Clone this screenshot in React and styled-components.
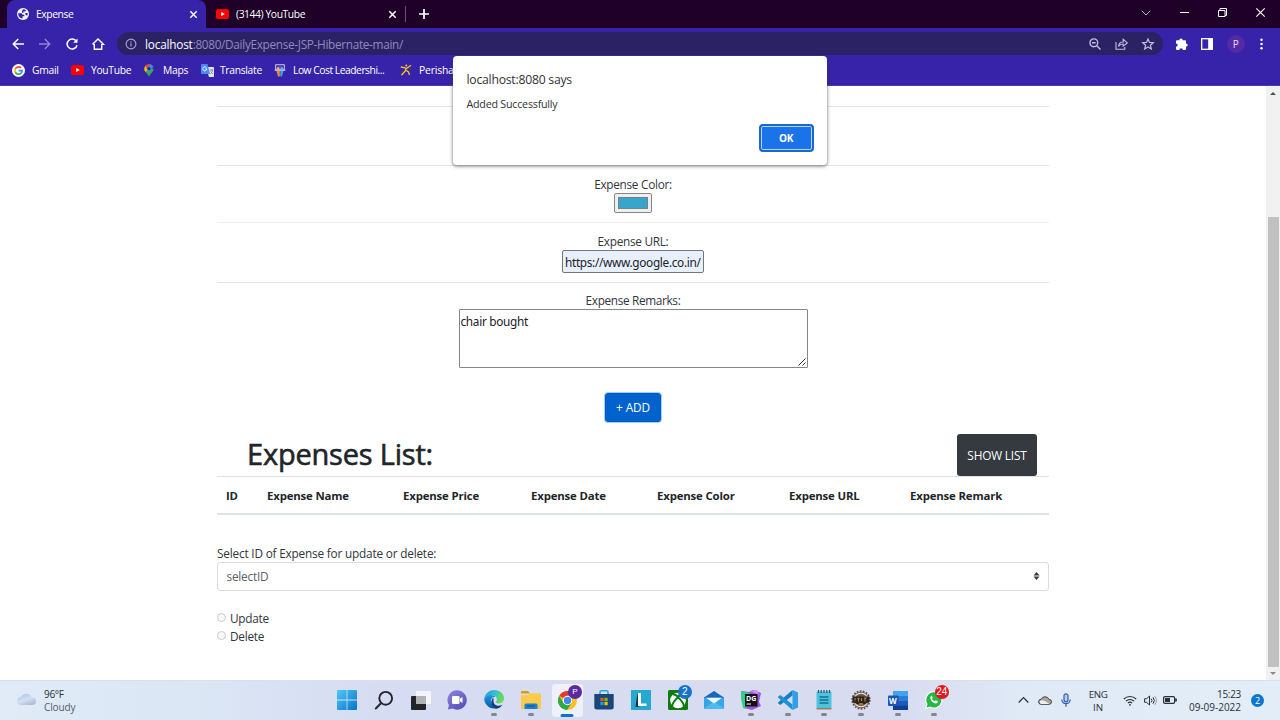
import React from "react";
import styled, { createGlobalStyle } from "styled-components";

const Global = createGlobalStyle`
  * { box-sizing: border-box; }
  body { margin: 0; background: #fff; overflow: hidden; font-family: "Open Sans", "Noto Sans", sans-serif; }
  svg { display: block; flex: none; overflow: visible; }
`;

const Screen = styled.div`
  position: relative;
  width: 1280px;
  height: 720px;
  display: flex;
  flex-direction: column;
  overflow: hidden;
`;

const Text = styled.span`
  font-family: ${(p) => (p.$noto ? '"Noto Sans"' : '"Open Sans"')}, sans-serif;
  font-size: ${(p) => p.$size || 11.8}px;
  font-weight: ${(p) => p.$weight || 400};
  letter-spacing: ${(p) => p.$ls || 0}px;
  color: ${(p) => p.$color || "inherit"};
  white-space: nowrap;
`;

/* ---------- browser chrome ---------- */

const TabStrip = styled.div`
  height: 28px;
  background: #1f0029;
  display: flex;
  padding-left: 7px;
  color: #fff;
`;

const Tab = styled.div`
  width: ${(p) => p.$w}px;
  height: 28px;
  display: flex;
  align-items: center;
  gap: ${(p) => p.$gap}px;
  padding: 0 9px 0 10px;
  background: ${(p) => (p.$active ? "#3723a9" : "transparent")};
  border-radius: 8px 8px 0 0;
`;

const Spacer = styled.div`
  flex: 1;
`;

const NewTab = styled.div`
  display: flex;
  align-items: center;
  gap: 13px;
`;

const Divider = styled.div`
  width: 1px;
  height: 16px;
  background: #6b5474;
`;

const WindowButtons = styled.div`
  display: flex;
  align-items: center;
  gap: 29px;
  padding: 0 15px 3px 0;
`;

const Toolbar = styled.div`
  height: 30px;
  background: #3723a9;
  display: flex;
  align-items: center;
  padding: 1px 11px 0 12px;
  color: #fff;
`;

const NavButtons = styled.div`
  display: flex;
  gap: 14.8px;
  width: 105px;
`;

const Omnibox = styled.div`
  width: 1046px;
  height: 23px;
  border-radius: 12px;
  background: #2b2266;
  display: flex;
  align-items: center;
  padding: 0 9px 0 8px;
  gap: 8px;
`;

const OmniActions = styled.div`
  display: flex;
  align-items: center;
  gap: 14px;
  color: #c3bfdd;
`;

const ToolActions = styled.div`
  flex: 1;
  display: flex;
  align-items: center;
  justify-content: space-between;
  padding: 0 6px 0 13px;
`;

const Avatar = styled.div`
  width: 18px;
  height: 18px;
  margin-right: 2px;
  border-radius: 50%;
  background: #552aa5;
  color: #eadcff;
  font-size: 10px;
  display: flex;
  align-items: center;
  justify-content: center;
`;

const Bookmarks = styled.div`
  height: 28px;
  background: #3723a9;
  border-bottom: 1px solid #4a3ab0;
  display: flex;
  align-items: center;
  padding: 0 0 3px 12px;
  color: #fff;
`;

const Bookmark = styled.div`
  flex: 0 0 ${(p) => p.$w}px;
  display: flex;
  align-items: center;
  gap: ${(p) => p.$gap || 6}px;
`;

/* ---------- page ---------- */

const Viewport = styled.div`
  height: 594px;
  display: flex;
  background: #fff;
  color: #212529;
`;

const Page = styled.div`
  flex: 1;
  display: flex;
  flex-direction: column;
  align-items: center;
`;

const Container = styled.div`
  width: 832px;
  display: flex;
  flex-direction: column;
  color: #30353a;
`;

const FormRow = styled.div`
  height: ${(p) => p.$h}px;
  border-bottom: ${(p) => (p.$last ? "0" : "1px")} solid ${(p) => p.$line || "#e2e4e6"};
  display: flex;
  flex-direction: column;
  align-items: center;
  padding-top: ${(p) => p.$top || 9}px;
`;

const Label = styled.label`
  height: 18px;
  display: flex;
  align-items: center;
`;

const ColorField = styled.div`
  width: 38px;
  height: 20px;
  border: 1px solid #85878b;
  border-radius: 2px;
  background: #efefef;
  padding: 3px;
`;

const Swatch = styled.div`
  height: 12px;
  background: #38a6cc;
  border: 1px solid #74838b;
`;

const UrlField = styled.div`
  width: 142px;
  height: 23px;
  border: 1px solid #767676;
  border-radius: 2px;
  background: #e8f0fe;
  display: flex;
  align-items: center;
  padding: 0 2px;
`;

const Remarks = styled.div`
  width: 349px;
  height: 59px;
  border: 1px solid #85878b;
  border-radius: 1px;
  display: flex;
  justify-content: space-between;
  padding: 2px 1px 1px 1px;
  line-height: 18px;
`;

const Grip = styled.div`
  align-self: flex-end;
`;

const AddButton = styled.button`
  width: 56px;
  height: 29px;
  margin: 0 auto;
  padding: 0 0 1px;
  border: 1px solid #005cbf;
  border-radius: 3px;
  box-shadow: 0 0 0 1px #9fd0ff;
  background: #0062cc;
  color: #fff;
`;

const ListHeader = styled.div`
  height: 42px;
  margin-top: 12px;
  display: flex;
  align-items: center;
  justify-content: space-between;
  padding: 0 12px 0 30px;
`;

const Heading = styled.h2`
  margin: 0;
  line-height: 40px;
  font-weight: 500;
  color: #212529;
  -webkit-text-stroke: 0.6px #212529;
`;

const ShowButton = styled.button`
  width: 80px;
  height: 42px;
  padding: 0;
  border: 0;
  border-radius: 3px;
  background: #343a40;
  color: #fff;
`;

const Table = styled.div`
  display: grid;
  grid-template-columns: 41px 136px 128px 126px 132px 121px 1fr;
  align-items: center;
  height: 39px;
  padding: 1px 0 0 9px;
  border-top: 1px solid #dee2e6;
  border-bottom: 2px solid #dee2e6;
  color: #212529;
`;

const SelectLabel = styled.label`
  height: 18px;
  margin-top: 29px;
  display: flex;
  align-items: center;
`;

const Select = styled.div`
  height: 29px;
  border: 1px solid #d9dde1;
  border-radius: 3px;
  display: flex;
  align-items: center;
  justify-content: space-between;
  padding: 0 8px 1px 8.500px;
  color: #5a6168;
`;

const Radios = styled.div`
  margin-top: 18px;
  display: flex;
  flex-direction: column;
`;

const RadioRow = styled.label`
  height: 18px;
  padding-bottom: 1px;
  display: flex;
  align-items: center;
  gap: 4px;
`;

const Dot = styled.span`
  width: 9px;
  height: 9px;
  border: 1px solid #c9cacc;
  border-radius: 50%;
  background: #f8f8f8;
`;

const Scrollbar = styled.div`
  width: 14px;
  background: #f1f1f1;
  display: flex;
  flex-direction: column;
  align-items: center;
`;

const ScrollArrow = styled.div`
  height: ${(p) => p.$h}px;
  display: flex;
  align-items: center;
`;

const Thumb = styled.div`
  width: 11px;
  height: 450px;
  margin: 116px 0 0 0;
  background: #c1c1c1;
`;

const Dialog = styled.div`
  position: absolute;
  left: 453px;
  top: 56px;
  width: 373.500px;
  height: 109px;
  padding: 13px 13px 13px 13.500px;
  background: #fff;
  border-radius: 4px;
  box-shadow: 0 1px 3px 1px rgba(50, 55, 60, 0.45);
  display: flex;
  flex-direction: column;
  color: #303134;
`;

const DialogLine = styled.div`
  height: ${(p) => p.$h}px;
  display: flex;
  align-items: center;
`;

const OkButton = styled.button`
  width: 55px;
  height: 28px;
  margin: auto 0 0 auto;
  padding: 0 0 1px;
  border: 2px solid #1967d2;
  border-radius: 4px;
  box-shadow: inset 0 0 0 1px #b9d7fb;
  background: #1a73e8;
  color: #fff;
`;

/* ---------- taskbar ---------- */

const Taskbar = styled.div`
  height: 40px;
  padding-bottom: 1px;
  border-top: 1px solid #dcdfe8;
  background: linear-gradient(90deg, #e0ebf7 0, #dbe6f5 200px, #d6dcf2 380px, #d8dcf0 900px, #e0eaf6 1030px, #e2edf8 100%);
  display: flex;
  align-items: center;
  color: #2b2f36;
`;

const Weather = styled.div`
  width: 329px;
  padding-left: 17px;
  display: flex;
  align-items: center;
  gap: 7px;
`;

const Stack = styled.div`
  display: flex;
  flex-direction: column;
  align-items: ${(p) => p.$align || "flex-start"};
  padding-top: 1px;
  line-height: 13px;
`;

const Apps = styled.div`
  display: grid;
  grid-template-columns: repeat(17, 36.7px);
`;

const AppSlot = styled.div`
  position: relative;
  height: 33px;
  margin: 0 2.5px;
  display: flex;
  align-items: center;
  justify-content: center;
  border-radius: 3px;
  background: ${(p) => (p.$active ? "#eef1fb" : "transparent")};
`;

const Running = styled.span`
  position: absolute;
  bottom: ${(p) => (p.$active ? 0 : 1)}px;
  left: 50%;
  transform: translateX(-50%);
  width: ${(p) => (p.$active ? 13 : 6)}px;
  height: 3px;
  border-radius: 2px;
  background: ${(p) => (p.$active ? "#1670c4" : "#83868f")};
`;

const Badge = styled.span`
  position: absolute;
  top: 1.500px;
  right: 1.500px;
  min-width: 14px;
  height: 14px;
  border-radius: 7px;
  background: ${(p) => p.$bg};
  color: #fff;
  font-family: "Liberation Sans", sans-serif;
  font-size: ${(p) => p.$size || 10}px;
  line-height: 14px;
  text-align: center;
`;

const Tray = styled.div`
  flex: 1;
  display: flex;
  align-items: center;
  padding: 0 16px 0 65px;
`;

const TrayIcons = styled.div`
  display: flex;
  align-items: center;
  gap: ${(p) => p.$gap}px;
  margin-right: ${(p) => p.$mr}px;
`;

const Clock = styled.div`
  width: 59px;
  margin-right: 10px;
`;

const Notice = styled.div`
  width: 13px;
  height: 13px;
  border-radius: 50%;
  background: #0a76d0;
  color: #fff;
  font-size: 9px;
  line-height: 13px;
  text-align: center;
`;

/* ---------- icons ---------- */

const Line = ({ w, h = w, sw = 1.3, vb, children, ...rest }) => (
  <svg width={w} height={h} viewBox={vb || `0 0 ${w} ${h}`} fill="none" stroke="currentColor" strokeWidth={sw} {...rest}>
    {children}
  </svg>
);

const Globe = () => (
  <svg width="12" height="12" viewBox="0 0 12 12">
    <circle cx="6" cy="6" r="6" fill="#f4f2fc" />
    <path d="M1.200 5.200h3.200l1.500 1.500h1.400v1.500H5.500v2.200C2.800 10.300 1 8 1.200 5.200zM6 1.200c1.200 0 2.200.4 3 1.100L8.200 3.500H6.500v1.300H5V3.300zM8.300 4.900h2.300c.2 1 0 2-.5 2.900L8.300 6.600z" fill="#3723a9" />
  </svg>
);

const YouTube = () => (
  <svg width="13" height="10" viewBox="0 0 13 10">
    <rect width="13" height="10" rx="2.6" fill="#f00" />
    <path d="M5.2 2.900v4.200L8.800 5z" fill="#fff" />
  </svg>
);

const Cross = ({ s = 7, sw = 1.5 }) => (
  <Line w={s} sw={sw}>
    <path d={`M.3.3l${s - 0.6} ${s - 0.6}M${s - 0.3} .3L.3 ${s - 0.3}`} />
  </Line>
);

const GoogleG = () => (
  <svg width="13" height="13" viewBox="0 0 14 14" fill="none" strokeWidth="1.8">
    <circle cx="7" cy="7" r="7" fill="#fff" />
    <path d="M9.700 4.200A3.900 3.900 0 0 0 3.600 5.200" stroke="#ea4335" />
    <path d="M3.600 5.200A3.900 3.900 0 0 0 3.600 8.900" stroke="#fbbc05" />
    <path d="M3.600 8.900A3.900 3.900 0 0 0 9.500 10" stroke="#34a853" />
    <path d="M9.500 10A3.900 3.900 0 0 0 10.900 7.200H7.200" stroke="#4285f4" />
  </svg>
);

const MapsPin = () => (
  <svg width="10" height="13" viewBox="0 0 10 13">
    <path d="M5 13C4.500 10 .3 8 .3 4.700L5 4.500l4.700.2C9.700 8 5.500 10 5 13z" fill="#34a853" />
    <path d="M.3 4.700A4.700 4.700 0 0 1 1.500 1.600L5 4.700 1.500 8A5 5 0 0 1 .3 4.700z" fill="#fbbc04" />
    <path d="M1.300 1.800A4.700 4.700 0 0 1 6.500.3L3 5z" fill="#ea4335" />
    <path d="M6 .1a4.700 4.700 0 0 1 3.400 2.700L4.500 8.500 3 5z" fill="#4285f4" />
    <circle cx="5" cy="4.600" r="1.600" fill="#2a2477" />
  </svg>
);

const TranslateIcon = () => (
  <svg width="13" height="13" viewBox="0 0 13 13">
    <path d="M5 3h7a1 1 0 0 1 1 1v8a1 1 0 0 1-1 1H8z" fill="#e3e6ee" />
    <path d="M1 0h5.500L9 10H1a1 1 0 0 1-1-1V1a1 1 0 0 1 1-1z" fill="#4b8af0" />
    <path d="M5.400 3.600A2 2 0 1 0 5.800 5H4.200" stroke="#fff" strokeWidth=".9" fill="none" />
    <path d="M8.500 6h3.700M10.300 5v1M11.600 6c-.4 2-1.300 3-2.300 3.800M9.600 7.500l2.300 2.500" stroke="#6e7c9b" strokeWidth=".8" fill="none" />
  </svg>
);

const Slides = () => (
  <svg width="12" height="13" viewBox="0 0 12 13">
    <path d="M1.500.6h9v5.200h-9z" fill="#5343a8" stroke="#b6aee6" />
    <path d="M.6 6.200h10.800" stroke="#dcd7f4" />
    <circle cx="4.100" cy="4.600" r="1.400" fill="#f5b070" />
    <circle cx="7.900" cy="4.600" r="1.400" fill="#69b3e8" />
    <path d="M2.500 7h3.300v5.500H4z" fill="#ef8a3a" />
    <path d="M6.200 7h3.300L8 12.500H6.200z" fill="#31a0d9" />
  </svg>
);

const Runner = () => (
  <svg width="12" height="12" viewBox="0 0 12 12" fill="none" stroke="#f6c32c" strokeWidth="1.300">
    <path d="M.8 3l4.700.9M11 1.200L6.500 4.500M6.200 3.700L5.200 7 1.500 11.200M5.500 6l3 2 1 3" />
    <path d="M7.500 5.500l3.500-1M4 7L.7 8.500" stroke="#54452f" strokeWidth="1" />
    <circle cx="6.300" cy="1.600" r="1" fill="#f6c32c" stroke="none" />
  </svg>
);

const Puzzle = () => (
  <svg width="12" height="12" viewBox="0 0 12 12" fill="#fff">
    <path d="M0 3.200a1 1 0 0 1 1-1h2.300a1.700 1.700 0 0 1 3.400 0H9a1 1 0 0 1 1 1v2.200a1.700 1.700 0 0 1 0 3.400V11a1 1 0 0 1-1 1H6.900a1.800 1.800 0 0 0-3.600 0H1a1 1 0 0 1-1-1V8.800a1.700 1.700 0 0 0 0-3.400z" />
  </svg>
);

const WinLogo = () => (
  <svg width="20" height="20" viewBox="0 0 20 20">
    <defs>
      <linearGradient id="win" x2="1" y2="1">
        <stop stopColor="#4fc9f7" />
        <stop offset="1" stopColor="#0873c9" />
      </linearGradient>
    </defs>
    <path d="M1 0h8.600v9.600H0V1a1 1 0 0 1 1-1zM10.400 0H19a1 1 0 0 1 1 1v8.600h-9.600zM0 10.400h9.600V20H1a1 1 0 0 1-1-1zM10.400 10.400H20V19a1 1 0 0 1-1 1h-8.600z" fill="url(#win)" />
  </svg>
);

const SearchIcon = () => (
  <Line w={18} sw={1.9} stroke="#24262b">
    <circle cx="10.700" cy="7.300" r="6.400" />
    <path d="M6.200 12L.8 17.500" strokeLinecap="round" />
  </Line>
);

const TaskView = () => (
  <svg width="20" height="19" viewBox="0 0 20 19">
    <rect y="5" width="15" height="14" rx="1" fill="#222428" />
    <rect x="5" y="0" width="15" height="13" rx="1" fill="#f3f4f7" />
    <rect x="5" y="5" width="10" height="8" fill="#b0b2b6" />
  </svg>
);

const Chat = () => (
  <svg width="20" height="20" viewBox="0 0 20 20">
    <defs>
      <linearGradient id="chat" x2=".7" y2="1">
        <stop stopColor="#8d86dd" />
        <stop offset="1" stopColor="#5950b8" />
      </linearGradient>
    </defs>
    <path d="M10 .3a9.700 9.700 0 1 1-4.400 18.300L.8 19.500l1.200-4.300A9.700 9.700 0 0 1 10 .3z" fill="url(#chat)" />
    <rect x="5" y="6" width="7.500" height="8" rx="1.300" fill="#fff" />
    <path d="M13 8.800L15.500 7v6L13 11.200z" fill="#fff" />
  </svg>
);

const Edge = () => (
  <svg width="20" height="20" viewBox="0 0 20 20">
    <defs>
      <linearGradient id="edgeTop" x2="1" y2=".4">
        <stop stopColor="#1897d8" />
        <stop offset=".55" stopColor="#35c1d2" />
        <stop offset="1" stopColor="#6bdc55" />
      </linearGradient>
      <linearGradient id="edgeLow" x2="0" y2="1">
        <stop stopColor="#1a9be0" />
        <stop offset="1" stopColor="#0c56a8" />
      </linearGradient>
    </defs>
    <path d="M.2 9.500C.6 4 5 0 10.300 0 16 0 20 3.800 20 8.200c0 3.200-2.400 5.200-5.200 5.200-2.300 0-3.300-1-2.900-1.800.8-1 1-1.700 1-2.400C12.700 6.600 10 5 7 5 3.500 5 .6 7 .2 9.500z" fill="url(#edgeTop)" />
    <path d="M.2 9.500C.8 6.500 4 4.800 7 5c2 .1 3.500.8 4.600 1.800C8 6.500 6.500 9.500 7 12.300c.7 3.400 4.500 5.500 8 5A10 10 0 0 1 .2 9.500z" fill="url(#edgeLow)" />
    <path d="M9.500 7.500C6.500 10 6.500 14.500 9.500 17.500c2.500 2 6 1.500 9-2.700-3 1.500-6.500 1.300-8-.8-1.400-2-1-4.500-1-6.500z" fill="#123f82" />
  </svg>
);

const Folder = () => (
  <svg width="20" height="18" viewBox="0 0 20 18">
    <path d="M0 1a1 1 0 0 1 1-1h6l2 2.500H0z" fill="#d99a1b" />
    <path d="M0 4h7l2-1.800h10a1 1 0 0 1 1 1V17a1 1 0 0 1-1 1H1a1 1 0 0 1-1-1z" fill="#fbcb49" />
    <path d="M3.500 18v-4a1.500 1.500 0 0 1 1.500-1.500h10a1.500 1.500 0 0 1 1.500 1.500v4z" fill="#1c7fd0" />
    <path d="M6 15h8" stroke="#0f5ba5" strokeWidth="1.300" />
  </svg>
);

const Chrome = () => (
  <svg width="19" height="19" viewBox="0 0 20 20">
    <circle cx="10" cy="10" r="10" fill="#fbc116" />
    <path d="M10 10L1.340 5A10 10 0 0 1 18.660 5H10z" fill="#e33b2e" />
    <path d="M1.340 5A10 10 0 0 0 9.500 20L14.300 12.500 10 14.500 5.700 12.500z" fill="#2da94f" />
    <circle cx="10" cy="10" r="5" fill="#fff" />
    <circle cx="10" cy="10" r="3.900" fill="#4285f4" />
  </svg>
);

const Store = () => (
  <svg width="20" height="20" viewBox="0 0 20 20">
    <path d="M6 4.500V2a1.200 1.200 0 0 1 1.200-1.200h5.600A1.200 1.200 0 0 1 14 2v2.500" fill="none" stroke="#2fa6dc" strokeWidth="1.500" />
    <path d="M.3 4h19.400v13a2.500 2.500 0 0 1-2.500 2.500H2.800A2.500 2.500 0 0 1 .3 17z" fill="#1a4678" />
    <path d="M6.300 7.800h3.300v3.300H6.300z" fill="#f25022" />
    <path d="M10.400 7.800h3.300v3.300h-3.300z" fill="#7fba00" />
    <path d="M6.300 11.900h3.300v3.300H6.300z" fill="#00a4ef" />
    <path d="M10.400 11.900h3.300v3.300h-3.300z" fill="#ffb900" />
  </svg>
);

const LApp = () => (
  <svg width="20" height="20" viewBox="0 0 20 20">
    <path d="M0 0h20v20H0z" fill="#27a9cf" />
    <path d="M6.500 3L4.500 17H8z" fill="#14303f" />
    <path d="M7 3h3v10.500h5.500V16H7z" fill="#fff" />
  </svg>
);

const Xbox = () => (
  <svg width="20" height="20" viewBox="0 0 20 20">
    <rect width="20" height="20" rx="1.500" fill="#107c10" />
    <circle cx="10" cy="10.500" r="7.800" fill="#fff" />
    <path d="M5 4.300C7 4.500 8.800 5.700 10 6.800c1.200-1.100 3-2.300 5-2.500M4 16.800c.3-3.300 2.500-6.500 6-9.600 3.500 3.100 5.700 6.300 6 9.600" fill="none" stroke="#107c10" strokeWidth="1.900" />
  </svg>
);

const Mail = () => (
  <svg width="20" height="18" viewBox="0 0 20 18">
    <path d="M0 6.500L10 0l10 6.500v3H0z" fill="#1768b8" />
    <path d="M0 6.800h20V17a1 1 0 0 1-1 1H1a1 1 0 0 1-1-1z" fill="#35a7e8" />
    <path d="M0 17.500L10 10.500l10 7-1 .5H1z" fill="#4fbaf2" />
    <path d="M2 6.800h16L10 12.500z" fill="#f5f9fd" />
  </svg>
);

const DataGrip = () => (
  <svg width="20" height="20" viewBox="0 0 20 20">
    <path d="M0 1l8 1 4-2 8 3-2 9 2 4-9 4-8-2L0 8z" fill="#9a55e0" />
    <path d="M0 1l9 2-4 16-3-1L0 8z" fill="#2fd089" />
    <path d="M9 1l7-1 2 5z" fill="#d38bf2" />
    <path d="M4 4h12.500v12.500H4z" fill="#111" />
    <text x="5" y="11" fontSize="7" fontWeight="700" fill="#fff" fontFamily="Open Sans, sans-serif">DG</text>
    <path d="M5.500 14h4.500" stroke="#fff" />
  </svg>
);

const VSCode = () => (
  <svg width="20" height="20" viewBox="0 0 20 20">
    <path d="M14.500 0L20 2.500v15L14.500 20z" fill="#2f9fe8" />
    <path d="M14.500 0v5.500L2.300 15 0 13.300v-.8z" fill="#167fc9" />
    <path d="M14.500 20v-5.500L2.300 5 0 6.700v.8z" fill="#1f8fd8" />
  </svg>
);

const Notepad = () => (
  <svg width="16" height="20" viewBox="0 0 16 20">
    <rect x=".5" y="1.500" width="15" height="17" rx="1" fill="#4dc3de" />
    <path d="M.5 18.800h15" stroke="#9a6634" strokeWidth="1.200" />
    <path d="M2.500 0v3M5.200 0v3M8 0v3M10.800 0v3M13.500 0v3" stroke="#2b5668" strokeWidth="1.200" />
    <path d="M3.500 7h9M3.500 10h9M3.500 13h9" stroke="#176e91" strokeWidth="1.300" />
  </svg>
);

const Gear = () => (
  <svg width="20" height="20" viewBox="0 0 20 20">
    <circle cx="10" cy="10" r="8.800" fill="none" stroke="#5b5048" strokeWidth="1.700" strokeDasharray="1.700 1.370" />
    <circle cx="10" cy="10" r="7.800" fill="#f0ede9" stroke="#6b5b4d" strokeWidth="1" />
    <circle cx="10" cy="10" r="6.200" fill="#6d5440" />
    <path d="M1.500 6.500h17v5.500L14 14H6l-4.500-2z" fill="#2d2420" />
    <path d="M4 8v2.500M6.500 8.500h2M7.500 8.500v3M10.500 8v3M13 8h2.500M14 8v3.500" stroke="#b98d5b" />
    <path d="M8 13h4v2.500H8z" fill="#9c7141" />
  </svg>
);

const Word = () => (
  <svg width="20" height="19" viewBox="0 0 20 19">
    <rect x="5" width="15" height="19" rx="1" fill="#2b7cd3" />
    <path d="M5 0h15v5H5z" fill="#41a5ee" />
    <path d="M5 10h15v4.500H5z" fill="#185abd" />
    <path d="M5 14.500h15V19H5z" fill="#103f91" />
    <rect y="4.500" width="10.500" height="10.500" rx="1" fill="#1a56b4" />
    <text x="1" y="12.700" fontSize="8" fontWeight="700" fill="#fff" fontFamily="Open Sans, sans-serif">W</text>
  </svg>
);

const WhatsApp = () => (
  <svg width="18" height="18" viewBox="0 0 18 18">
    <path d="M9 .2a8.700 8.700 0 1 1-4.200 16.400L0 18l1.400-4.600A8.700 8.700 0 0 1 9 .2z" fill="#fff" />
    <path d="M9 1.300a7.600 7.600 0 1 1-4 14.100L1.500 16.500l1.100-3.400A7.600 7.600 0 0 1 9 1.300z" fill="#25b943" />
    <path d="M5.600 5.200c.7-.9 1.300-.5 1.500 0l.6 1.500-.7 1c.6 1.300 1.500 2 2.800 2.600l.9-1.100 2.100 1c.3.700-.5 2.300-2 2.300C8 12.500 4.500 8.500 5.600 5.200z" fill="#fff" />
  </svg>
);

const CloudBig = () => (
  <svg width="20" height="14" viewBox="0 0 20 14">
    <defs>
      <linearGradient id="cloud" x2=".6" y2="1">
        <stop stopColor="#9fc1ee" />
        <stop offset=".6" stopColor="#d5e0f0" />
        <stop offset="1" stopColor="#acbfdb" />
      </linearGradient>
    </defs>
    <path d="M4 12A4 4 0 0 1 4 4a6 6 0 0 1 11 .5A3.800 3.800 0 0 1 16 12z" fill="url(#cloud)" />
  </svg>
);

const TrayCloud = () => (
  <svg width="14" height="10" viewBox="0 0 14 10">
    <path d="M3 9.300a2.500 2.500 0 0 1 .2-5A4.200 4.200 0 0 1 11 4.500a2.400 2.400 0 0 1 .2 4.800z" fill="#aaa7a3" stroke="#3f4043" />
    <path d="M3 9a2 2 0 0 1 .8-3.800L7 6l4.500 3z" fill="#f1efec" />
  </svg>
);

const Mic = () => (
  <Line w={10} h={14} sw={1.200} stroke="#2f5fae">
    <rect x="3" y=".8" width="4" height="8" rx="2" fill="#b9cfee" />
    <path d="M.8 6.500a4.200 4.200 0 0 0 8.400 0M5 10.800v3" />
  </Line>
);

const Wifi = () => (
  <Line w={14} h={11} sw={1.100}>
    <path d="M.8 4A9 9 0 0 1 13.200 4M2.800 6.200a6 6 0 0 1 8.400 0M4.900 8.200a3 3 0 0 1 4.200 0" />
    <circle cx="7" cy="9.800" r=".9" fill="currentColor" stroke="none" />
  </Line>
);

const Speaker = () => (
  <Line w={13} h={11} sw={1}>
    <path d="M.6 3.700h2L5.500 1v9L2.600 7.300h-2zM7.300 3.700a3 3 0 0 1 0 3.600M9 2.300a5 5 0 0 1 0 6.400" />
    <path d="M10.700 1a7.500 7.500 0 0 1 0 9" opacity=".4" />
  </Line>
);

const Battery = () => (
  <Line w={14} h={8} sw={1.200}>
    <rect x=".6" y=".6" width="11" height="6.800" rx="1.300" />
    <path d="M2 2h5v4H2z" fill="currentColor" stroke="none" />
    <path d="M13 2.600v2.800" strokeWidth="1.700" />
  </Line>
);

/* ---------- data ---------- */

const bookmarks = [
  { icon: <GoogleG />, label: "Gmail", w: 59, gap: 7, ls: -0.35 },
  { icon: <YouTube />, label: "YouTube", w: 73, gap: 7, ls: -0.4 },
  { icon: <MapsPin />, label: "Maps", w: 57, gap: 9, ls: -0.35 },
  { icon: <TranslateIcon />, label: "Translate", w: 73, gap: 6, ls: -0.4 },
  { icon: <Slides />, label: "Low Cost Leadershi...", w: 126, gap: 7, ls: -0.58 },
  { icon: <Runner />, label: "Perishable", w: 60, gap: 7, ls: -0.25 },
].map((b) => ({ ...b, ls: b.ls + 0.1 }));

const columns = ["ID", "Expense Name", "Expense Price", "Expense Date", "Expense Color", "Expense URL", "Expense Remark"];

const apps = [
  { icon: <WinLogo /> },
  { icon: <SearchIcon /> },
  { icon: <TaskView /> },
  { icon: <Chat /> },
  { icon: <Edge />, run: true },
  { icon: <Folder />, run: true },
  { icon: <Chrome />, run: true, active: true, badge: "P", bg: "#5a2aa0", size: 8 },
  { icon: <Store /> },
  { icon: <LApp /> },
  { icon: <Xbox />, badge: "2", bg: "#1673c8" },
  { icon: <Mail /> },
  { icon: <DataGrip />, run: true },
  { icon: <VSCode />, run: true },
  { icon: <Notepad />, run: true },
  { icon: <Gear />, run: true },
  { icon: <Word />, run: true },
  { icon: <WhatsApp />, run: true, badge: "24", bg: "#e5141f" },
];

export default function App() {
  return (
    <Screen>
      <Global />
      <TabStrip>
        <Tab $active $w={199} $gap={7}>
          <Globe />
          <Text $size={10.300} $ls={-0.4}>Expense</Text>
          <Spacer />
          <Cross />
        </Tab>
        <Tab $w={199} $gap={7}>
          <YouTube />
          <Text $size={10.300} $ls={-0.400}>(3144) YouTube</Text>
          <Spacer />
          <Cross />
        </Tab>
        <NewTab>
          <Divider />
          <Line w={10} sw={1.700}><path d="M5 0v10M0 5h10" /></Line>
        </NewTab>
        <Spacer />
        <WindowButtons>
          <Line w={10} h={6} sw={1} opacity=".7"><path d="M.7.700L5 5 9.300.700" /></Line>
          <Line w={9} h={9} sw={1}><path d="M0 4.500h9" /></Line>
          <Line w={9} h={9} sw={1}><path d="M.5 2.500h6.500V8.500H.5zM2 2.500V.5h6.500v7H7" /></Line>
          <Cross s={9} sw={1.100} />
        </WindowButtons>
      </TabStrip>

      <Toolbar>
        <NavButtons>
          <Line w={12} sw={1.400}><path d="M12 6H1.200M6.200 1L1.200 6l5 5" /></Line>
          <Line w={12} sw={1.300} opacity=".45"><path d="M0 6h10.800M5.800 1l5 5-5 5" /></Line>
          <Line w={12} sw={1.500}>
            <path d="M10.300 3.200A5 5 0 1 0 11 7.200" />
            <path d="M11.500.5v4.300H7.200z" fill="currentColor" stroke="none" />
          </Line>
          <Line w={12} sw={1.400}><path d="M2.300 6v5.200h7.400V6M.6 6.300L6 1l5.400 5.300H9.700M.6 6.300h1.700" /></Line>
        </NavButtons>
        <Omnibox>
          <Line w={12} sw={1.100} color="#aaa5cf">
            <circle cx="6" cy="6" r="4.900" />
            <path d="M6 5.300v3.300M6 3.200v1.200" />
          </Line>
          <Text $size={11.800} $ls={-0.320} $color="#9089bf">
            <Text $size={11.800} $ls={-0.200} $color="#fff">localhost</Text>:8080/DailyExpense-JSP-Hibernate-main/
          </Text>
          <Spacer />
          <OmniActions>
            <Line w={12} sw={1.400}><circle cx="4.800" cy="4.800" r="3.900" /><path d="M7.700 7.700L11.500 11.500M3 4.800h3.600" /></Line>
            <Line w={13} h={12} sw={1.100}><path d="M1 4v7.300h8.800V9M3.500 8.500c.3-3 2-4.500 4.700-4.500V1.200L12.300 5 8.200 8.200V6C6 6 4.500 7 3.500 8.500z" /></Line>
            <Line w={12} sw={1.200}><path d="M6 .9l1.500 3.500 3.800.3-2.900 2.500.9 3.700L6 8.900l-3.300 2 .9-3.700L.7 4.700l3.800-.3z" /></Line>
          </OmniActions>
        </Omnibox>
        <ToolActions>
          <Puzzle />
          <Line w={12} sw={1.300}>
            <rect x=".7" y=".7" width="10.600" height="10.600" />
            <path d="M7.200 0h4.800v12H7.200z" fill="currentColor" stroke="none" />
          </Line>
          <Avatar>P</Avatar>
          <svg width="3" height="12" viewBox="0 0 3 12" fill="#fff">
            <circle cx="1.500" cy="1.700" r="1.250" />
            <circle cx="1.500" cy="6" r="1.250" />
            <circle cx="1.500" cy="10.300" r="1.250" />
          </svg>
        </ToolActions>
      </Toolbar>

      <Bookmarks>
        {bookmarks.map((b) => (
          <Bookmark key={b.label} $w={b.w} $gap={b.gap}>
            {b.icon}
            <Text $size={10.300} $ls={b.ls}>{b.label}</Text>
          </Bookmark>
        ))}
      </Bookmarks>

      <Viewport>
        <Page>
          <Container>
            <FormRow $h={21} />
            <FormRow $h={59} />
            <FormRow $h={57} $line="#eef0f1">
              <Label><Text $ls={-0.28}>Expense Color:</Text></Label>
              <ColorField><Swatch /></ColorField>
            </FormRow>
            <FormRow $h={60}>
              <Label><Text $ls={-0.28}>Expense URL:</Text></Label>
              <UrlField>
                <Text $noto $ls={-0.32} $color="#202124">https://www.google.co.in/</Text>
              </UrlField>
            </FormRow>
            <FormRow $h={110} $last $top={8}>
              <Label><Text $ls={-0.34}>Expense Remarks:</Text></Label>
              <Remarks>
                <Text $noto $ls={-0.300} $color="#202124">chair bought</Text>
                <Grip><Line w={8} h={8} sw={1}><path d="M.5 7.500l7-7M4.500 7.500l3-3" /></Line></Grip>
              </Remarks>
            </FormRow>
            <AddButton><Text $ls={-0.050}>+ ADD</Text></AddButton>
            <ListHeader>
              <Heading><Text $size={29} $weight={500} $ls={-0.2}>Expenses List:</Text></Heading>
              <ShowButton><Text $ls={-0.16}>SHOW LIST</Text></ShowButton>
            </ListHeader>
            <Table>
              {columns.map((c) => <Text key={c} $size={11.400} $weight={700} $ls={-0.16}>{c}</Text>)}
            </Table>
            <SelectLabel><Text $ls={-0.190}>Select ID of Expense for update or delete:</Text></SelectLabel>
            <Select>
              <Text $ls={-0.200}>selectID</Text>
              <svg width="7" height="8" viewBox="0 0 7 8" fill="#343a40"><path d="M3.500 0l3 3.400h-6zM3.500 8l3-3.400h-6z" /></svg>
            </Select>
            <Radios>
              <RadioRow><Dot /><Text $ls={-0.25}>Update</Text></RadioRow>
              <RadioRow><Dot /><Text $ls={-0.25}>Delete</Text></RadioRow>
            </Radios>
          </Container>
        </Page>
        <Scrollbar>
          <ScrollArrow $h={15}><svg width="6" height="3" viewBox="0 0 6 3"><path d="M0 3l3-3 3 3z" fill="#505050" /></svg></ScrollArrow>
          <Thumb />
          <ScrollArrow $h={13}><svg width="6" height="3" viewBox="0 0 6 3"><path d="M0 0l3 3 3-3z" fill="#8a8a8a" /></svg></ScrollArrow>
        </Scrollbar>
      </Viewport>

      <Taskbar>
        <Weather>
          <CloudBig />
          <Stack>
            <Text $size={10} $ls={-0.3}>96°F</Text>
            <Text $size={10} $ls={-0.1} $color="#555b66">Cloudy</Text>
          </Stack>
        </Weather>
        <Apps>
          {apps.map((a, i) => (
            <AppSlot key={i} $active={a.active}>
              {a.icon}
              {a.badge && <Badge $bg={a.bg} $size={a.size}>{a.badge}</Badge>}
              {a.run && <Running $active={a.active} />}
            </AppSlot>
          ))}
        </Apps>
        <Tray>
          <TrayIcons $gap={9} $mr={18}>
            <Line w={11} h={6} sw={1.200}><path d="M.7 5.500l4.800-4.800 4.800 4.800" /></Line>
            <TrayCloud />
            <Mic />
          </TrayIcons>
          <Stack $align="center">
            <Text $size={9.800} $ls={-0.4}>ENG</Text>
            <Text $size={9.800}>IN</Text>
          </Stack>
          <Spacer />
          <TrayIcons $gap={6.500} $mr={5}>
            <Wifi />
            <Speaker />
            <Battery />
          </TrayIcons>
          <Clock>
            <Stack $align="flex-end">
              <Text $size={10} $ls={-0.3}>15:23</Text>
              <Text $size={10} $ls={-0.02}>09-09-2022</Text>
            </Stack>
          </Clock>
          <Notice>2</Notice>
        </Tray>
      </Taskbar>

      <Dialog>
        <DialogLine $h={20}><Text $size={12.200} $ls={-0.230}>localhost:8080 says</Text></DialogLine>
        <DialogLine $h={29}><Text $size={10.700} $ls={-0.220}>Added Successfully</Text></DialogLine>
        <OkButton><Text $size={10} $weight={700} $ls={-0.3}>OK</Text></OkButton>
      </Dialog>
    </Screen>
  );
}
